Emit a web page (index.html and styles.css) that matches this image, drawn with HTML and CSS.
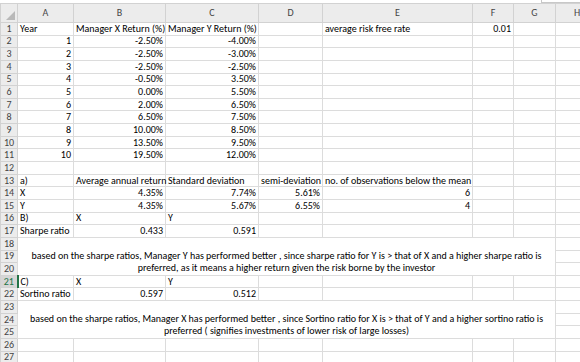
FILE: index.html
```html
<!DOCTYPE html>
<html>
<head>
<meta charset="utf-8">
<link rel="stylesheet" href="styles.css">
</head>
<body>
<div class="topbar"><div class="fbox"></div></div>
<table class="sheet">
<colgroup>
<col class="c-rh"><col class="c-a"><col class="c-b"><col class="c-c"><col class="c-d"><col class="c-e"><col class="c-f"><col class="c-g"><col class="c-h">
</colgroup>
<thead>
<tr class="hdr"><th class="corner"><span class="tri"></span></th><th>A</th><th>B</th><th>C</th><th>D</th><th>E</th><th>F</th><th>G</th><th>H</th></tr>
</thead>
<tbody>
<tr><th>1</th><td>Year</td><td>Manager X Return (%)</td><td>Manager Y Return (%)</td><td></td><td>average risk free rate</td><td class="r">0.01</td><td></td><td></td></tr>
<tr><th>2</th><td class="r">1</td><td class="r">-2.50%</td><td class="r">-4.00%</td><td></td><td></td><td></td><td></td><td></td></tr>
<tr><th>3</th><td class="r">2</td><td class="r">-2.50%</td><td class="r">-3.00%</td><td></td><td></td><td></td><td></td><td></td></tr>
<tr><th>4</th><td class="r">3</td><td class="r">-2.50%</td><td class="r">-2.50%</td><td></td><td></td><td></td><td></td><td></td></tr>
<tr><th>5</th><td class="r">4</td><td class="r">-0.50%</td><td class="r">3.50%</td><td></td><td></td><td></td><td></td><td></td></tr>
<tr><th>6</th><td class="r">5</td><td class="r">0.00%</td><td class="r">5.50%</td><td></td><td></td><td></td><td></td><td></td></tr>
<tr><th>7</th><td class="r">6</td><td class="r">2.00%</td><td class="r">6.50%</td><td></td><td></td><td></td><td></td><td></td></tr>
<tr><th>8</th><td class="r">7</td><td class="r">6.50%</td><td class="r">7.50%</td><td></td><td></td><td></td><td></td><td></td></tr>
<tr><th>9</th><td class="r">8</td><td class="r">10.00%</td><td class="r">8.50%</td><td></td><td></td><td></td><td></td><td></td></tr>
<tr><th>10</th><td class="r">9</td><td class="r">13.50%</td><td class="r">9.50%</td><td></td><td></td><td></td><td></td><td></td></tr>
<tr><th>11</th><td class="r">10</td><td class="r">19.50%</td><td class="r">12.00%</td><td></td><td></td><td></td><td></td><td></td></tr>
<tr><th>12</th><td></td><td></td><td></td><td></td><td></td><td></td><td></td><td></td></tr>
<tr><th>13</th><td>a)</td><td>Average annual return</td><td>Standard deviation</td><td>semi-deviation</td><td>no. of observations below the mean</td><td></td><td></td><td></td></tr>
<tr><th>14</th><td>X</td><td class="r">4.35%</td><td class="r">7.74%</td><td class="r">5.61%</td><td class="r">6</td><td></td><td></td><td></td></tr>
<tr><th>15</th><td>Y</td><td class="r">4.35%</td><td class="r">5.67%</td><td class="r">6.55%</td><td class="r">4</td><td></td><td></td><td></td></tr>
<tr><th>16</th><td>B)</td><td>X</td><td>Y</td><td></td><td></td><td></td><td></td><td></td></tr>
<tr><th>17</th><td>Sharpe ratio</td><td class="r">0.433</td><td class="r">0.591</td><td></td><td></td><td></td><td></td><td></td></tr>
<tr><th>18</th><td class="merged" colspan="7" rowspan="3">based on the sharpe ratios, Manager Y has performed better , since sharpe ratio for Y is &gt; that of X and a higher sharpe ratio is<br>preferred, as it means a higher return given the risk borne by the investor</td><td></td></tr>
<tr><th>19</th><td></td></tr>
<tr><th>20</th><td></td></tr>
<tr><th class="active">21</th><td>C)</td><td>X</td><td>Y</td><td></td><td></td><td></td><td></td><td></td></tr>
<tr><th>22</th><td>Sortino ratio</td><td class="r">0.597</td><td class="r">0.512</td><td></td><td></td><td></td><td></td><td></td></tr>
<tr><th>23</th><td class="merged" colspan="7" rowspan="3">based on the sharpe ratios, Manager X has performed better , since Sortino ratio for X is &gt; that of Y and a higher sortino ratio is<br>preferred ( signifies investments of lower risk of large losses)</td><td></td></tr>
<tr><th>24</th><td></td></tr>
<tr><th>25</th><td></td></tr>
<tr><th>26</th><td></td><td></td><td></td><td></td><td></td><td></td><td></td><td></td></tr>
<tr><th>27</th><td></td><td></td><td></td><td></td><td></td><td></td><td></td><td></td></tr>
</tbody>
</table>
</body>
</html>
```
FILE: styles.css
```css
html, body {
  margin: 0;
  padding: 0;
  width: 580px;
  height: 362px;
  overflow: hidden;
  background: #ffffff;
}
body {
  font-family: Carlito, Calibri, Lato, "Liberation Sans", sans-serif;
  font-size: 10px;
  color: #000000;
}
.topbar {
  height: 3px;
  background: #ffffff;
  position: relative;
}
.fbox {
  position: absolute;
  right: 0;
  top: 0;
  width: 38px;
  height: 2px;
  border-left: 1px solid #c8c8c8;
  border-bottom: 1px solid #c8c8c8;
}
.sheet {
  border-collapse: collapse;
  table-layout: fixed;
  width: 598px;
}
.c-rh { width: 17px; }
.c-a { width: 56px; }
.c-b { width: 92px; }
.c-c { width: 93px; }
.c-d { width: 64px; }
.c-e { width: 150px; }
.c-f { width: 41px; }
.c-g { width: 42px; }
.c-h { width: 43px; }
.sheet tbody tr {
  height: 12.65px;
}
.sheet thead tr {
  height: 19px;
}
.sheet td, .sheet th {
  padding: 0 2px;
  line-height: 10px;
  white-space: nowrap;
  overflow: visible;
  border: 1px solid #dcdcdc;
  vertical-align: middle;
  text-align: left;
  font-weight: normal;
}
.sheet td.r { text-align: right; }
.sheet thead th {
  background: #ececec;
  color: #444444;
  text-align: center;
  vertical-align: middle;
  border: 1px solid #d2d2d2;
}
.sheet tbody th {
  background: #ececec;
  color: #444444;
  text-align: center;
  padding: 0;
  border-color: #d2d2d2;
}
.sheet tbody th.active {
  background: #d6d6d6;
  color: #217346;
  border-right: 2px solid #217346;
}
.corner {
  position: relative;
}
.tri {
  position: absolute;
  right: 2px;
  bottom: 2px;
  width: 0;
  height: 0;
  border-left: 9px solid transparent;
  border-bottom: 9px solid #b9b9b9;
}
.sheet td.merged {
  text-align: center;
  vertical-align: bottom;
  line-height: 12.65px;
  padding-bottom: 0;
}
```
